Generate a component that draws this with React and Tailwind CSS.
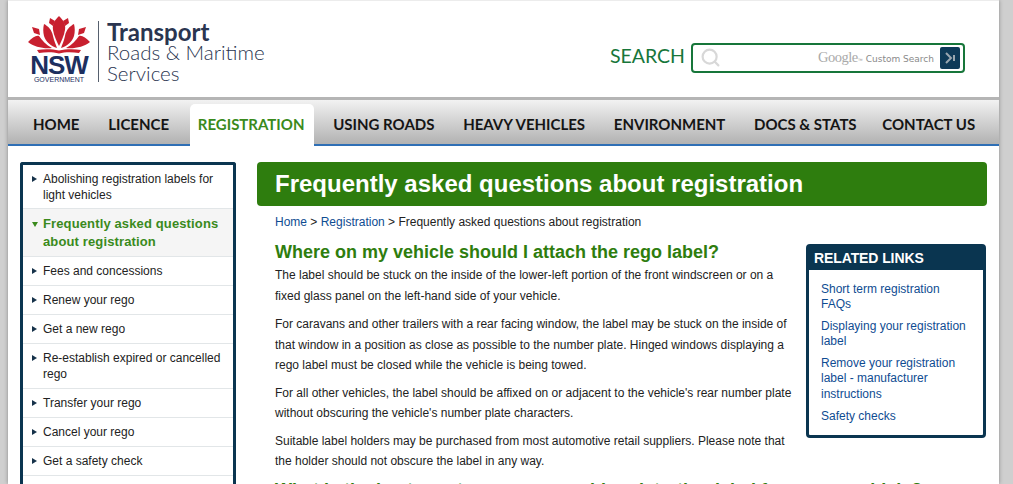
import React from 'react';
import { Search } from 'lucide-react';

const navItems = [
  { label: 'HOME' },
  { label: 'LICENCE' },
  { label: 'REGISTRATION', active: true },
  { label: 'USING ROADS' },
  { label: 'HEAVY VEHICLES' },
  { label: 'ENVIRONMENT' },
  { label: 'DOCS & STATS' },
  { label: 'CONTACT US', last: true },
];

const sideItems = [
  { label: 'Abolishing registration labels for light vehicles', height: 'h-[44px]' },
  { label: 'Frequently asked questions about registration', height: 'h-[48px]', active: true },
  { label: 'Fees and concessions' },
  { label: 'Renew your rego' },
  { label: 'Get a new rego' },
  { label: 'Re-establish expired or cancelled rego', height: 'h-[45px]' },
  { label: 'Transfer your rego' },
  { label: 'Cancel your rego' },
  { label: 'Get a safety check' },
  { label: '' },
];

const relatedLinks = [
  'Short term registration FAQs',
  'Displaying your registration label',
  'Remove your registration label - manufacturer instructions',
  'Safety checks',
];

const petals = (
  <>
    <path d="M22 2L27 5L25 10L21 7Z" />
    <path d="M16 8C20 10 24 14 25 20C26 25 28 29 29 32C23 30 18 26 16 20C15 16 15 12 16 8Z" />
    <path d="M4 11L11 13L12 19L6 17Z" />
    <path d="M0 26C4 22 8 19 11 20C14 24 18 29 24 32C16 33 6 31 0 26Z" />
    <path d="M9 34C16 33 24 33 31 34.5L31 37.5C25 36 18 36 11 37Z" />
  </>
);

const Waratah = () => (
  <svg width="62" height="38" viewBox="0 0 62 38" fill="#c8202f">
    <path d="M31 0C35 4 38 8 37 14C36 20 33 26 31 30C29 26 26 20 25 14C24 8 27 4 31 0Z" />
    {petals}
    <g transform="matrix(-1 0 0 1 62 0)">{petals}</g>
  </svg>
);

const Logo = () => (
  <div className="flex items-start ml-[20px] mt-[15px]">
    <div className="w-[62px] flex flex-col items-center">
      <Waratah />
      <div className="text-[#1d2f5f] text-[26px] leading-[22px] font-black tracking-[-1px] font-['Liberation_Sans',sans-serif]">NSW</div>
      <div className="text-[#1d2f5f] text-[7px] leading-[8px] font-['Liberation_Sans',sans-serif]">GOVERNMENT</div>
    </div>
    <div className="w-px h-[61px] bg-[#56606e] mt-[5px] ml-[8px] mr-[8px]" />
    <div className="font-['Lato',sans-serif] text-[#2a3550] mt-[5px]">
      <div className="font-bold text-[24px] leading-[21px]">Transport</div>
      <div className="font-light text-[20.5px] leading-[21px]">Roads &amp; Maritime</div>
      <div className="font-light text-[20.5px] leading-[21px]">Services</div>
    </div>
  </div>
);

const SearchBar = () => (
  <div className="flex items-center self-start ml-auto mr-[34px] mt-[41px]">
    <span className="font-['Lato',sans-serif] text-[#17763a] text-[19.5px] leading-[28px] mr-[6px] mb-[3px]">SEARCH</span>
    <div className="w-[274px] h-[30px] border-2 border-[#17763a] rounded-[4px] flex items-center bg-white pl-[7px] pr-[3px]">
      <Search size={21} strokeWidth={2.5} className="text-[#d8d8d8]" />
      <div className="ml-auto flex items-baseline text-[#999] mr-[6px]">
        <span className="font-['Liberation_Serif',serif] text-[14.5px] text-[#aaa] tracking-[-0.5px]">Google</span>
        <span className="text-[5px] mr-[3px]">™</span>
        <span className="font-['DejaVu_Sans',sans-serif] text-[9px] text-[#8a8a8a]">Custom Search</span>
      </div>
      <div className="w-[20px] h-[22px] bg-[#0e3a58] rounded-[2px] flex items-center justify-center">
        <svg width="12" height="12" viewBox="0 0 12 12" fill="none" stroke="#9aa7b0" strokeWidth="2">
          <path d="M2 1l5 5-5 5" />
          <path d="M10 3v6" />
        </svg>
      </div>
    </div>
  </div>
);

const NavBar = () => (
  <div className="h-[49px] shrink-0 border-t-[3px] border-b-2 border-t-[#b5b5b5] border-b-[#2f6fb5] bg-gradient-to-b from-[#f2f2f2] to-[#b2b2b2] flex items-end pl-[25px] gap-[28.7px]">
    {navItems.map((item) => (
      <div
        key={item.label}
        className={`font-['Lato',sans-serif] font-bold text-[15px] text-center flex items-center justify-center shrink-0 ${
          item.active
            ? 'h-[42px] -mb-[2px] pb-[2px] -ml-[8px] -mr-[9px] pl-[8px] pr-[9px] bg-white rounded-t-[5px] text-[#3a8a1c]'
            : 'h-[40px] text-[#151515]'
        } ${item.last ? '-ml-[3px]' : ''}`}
      >
        {item.label}
      </div>
    ))}
  </div>
);

const SideMenu = () => (
  <div className="w-[216px] shrink-0 h-[340px] border-[3px] border-b-0 border-[#0a3550] rounded-t-[3px] overflow-hidden">
    {sideItems.map((item, i) => (
      <div
        key={i}
        className={`${item.height || 'h-[29px]'} flex items-center border-b border-[#e2e6e8] pl-[9px] pr-[8px] ${
          item.active ? 'bg-[#f5f5f5]' : ''
        }`}
      >
        {item.label && (
          <>
            {item.active ? (
              <span className="w-0 h-0 mr-[5px] self-start mt-[13px] shrink-0 border-l-[3px] border-r-[3px] border-t-[5px] border-l-transparent border-r-transparent border-t-[#3a8a1c]" />
            ) : (
              <span className="w-0 h-0 mr-[6px] self-start mt-[11px] shrink-0 border-t-[3px] border-b-[3px] border-l-[5px] border-t-transparent border-b-transparent border-l-[#16324a]" />
            )}
            <span
              className={
                item.active
                  ? 'text-[#3a8a1c] font-bold text-[13px] leading-[18px] tracking-[0.13px]'
                  : 'text-[#222] text-[12px] leading-[16px]'
              }
            >
              {item.label}
            </span>
          </>
        )}
      </div>
    ))}
  </div>
);

const RelatedLinks = () => (
  <div className="float-right w-[180px] h-[194px] border-[3px] border-[#0a3550] rounded-[4px] ml-[14px] mt-[4px]">
    <div className="bg-[#0a3550] h-[23px] text-white font-bold text-[14px] leading-[22px] pl-[5px] tracking-[-0.1px]">RELATED LINKS</div>
    <div className="px-[12px] pt-[12px] flex flex-col gap-[6.5px]">
      {relatedLinks.map((link) => (
        <a key={link} className="text-[#0f4c92] text-[12px] leading-[15.3px] block">{link}</a>
      ))}
    </div>
  </div>
);

const paragraphs = [
  { text: 'The label should be stuck on the inside of the lower-left portion of the front windscreen or on a fixed glass panel on the left-hand side of your vehicle.', gap: 'mb-[8px]' },
  { text: 'For caravans and other trailers with a rear facing window, the label may be stuck on the inside of that window in a position as close as possible to the number plate. Hinged windows displaying a rego label must be closed while the vehicle is being towed.', gap: 'mb-[7px]' },
  { text: "For all other vehicles, the label should be affixed on or adjacent to the vehicle's rear number plate without obscuring the vehicle's number plate characters.", gap: 'mb-[7px]' },
  { text: 'Suitable label holders may be purchased from most automotive retail suppliers. Please note that the holder should not obscure the label in any way.', gap: 'mb-[6px]' },
];

export default function App() {
  return (
    <div className="h-[484px] overflow-hidden bg-[#cfcfcf] px-[8px] font-['Liberation_Sans',sans-serif]">
      <div className="w-[991px] h-full bg-white flex flex-col shadow-[0_0_4px_rgba(0,0,0,0.35)]">
        <div className="h-[97px] flex shrink-0 border-t border-[#ececec]">
          <Logo />
          <SearchBar />
        </div>
        <NavBar />
        <div className="flex pt-[16px] pl-[12px] pr-[12px]">
          <SideMenu />
          <div className="ml-[21px] flex-1 min-w-0">
            <h1 className="bg-[#2e7d0e] rounded-[4px] h-[44px] text-white font-bold text-[24px] leading-[43px] pl-[18px]">
              Frequently asked questions about registration
            </h1>
            <div className="pl-[18px] pt-[9px] pr-[1px]">
              <div className="text-[12px] leading-[15px] text-[#222]">
                <a className="text-[#0f4c92]">Home</a> &gt; <a className="text-[#0f4c92]">Registration</a> &gt; Frequently asked questions about registration
              </div>
              <div className="mt-[10px] text-[12px] leading-[20.5px] text-[#222]">
                <RelatedLinks />
                <h2 className="text-[#2e7d0e] font-bold text-[18px] leading-[24px] mb-[1px]">
                  Where on my vehicle should I attach the rego label?
                </h2>
                {paragraphs.map((p) => (
                  <p key={p.text} className={p.gap}>{p.text}</p>
                ))}
                <h2 className="text-[#2e7d0e] font-bold text-[18px] leading-[24px]">
                  What is the best way to remove my old registration label from your vehicle?
                </h2>
              </div>
            </div>
          </div>
        </div>
      </div>
    </div>
  );
}
